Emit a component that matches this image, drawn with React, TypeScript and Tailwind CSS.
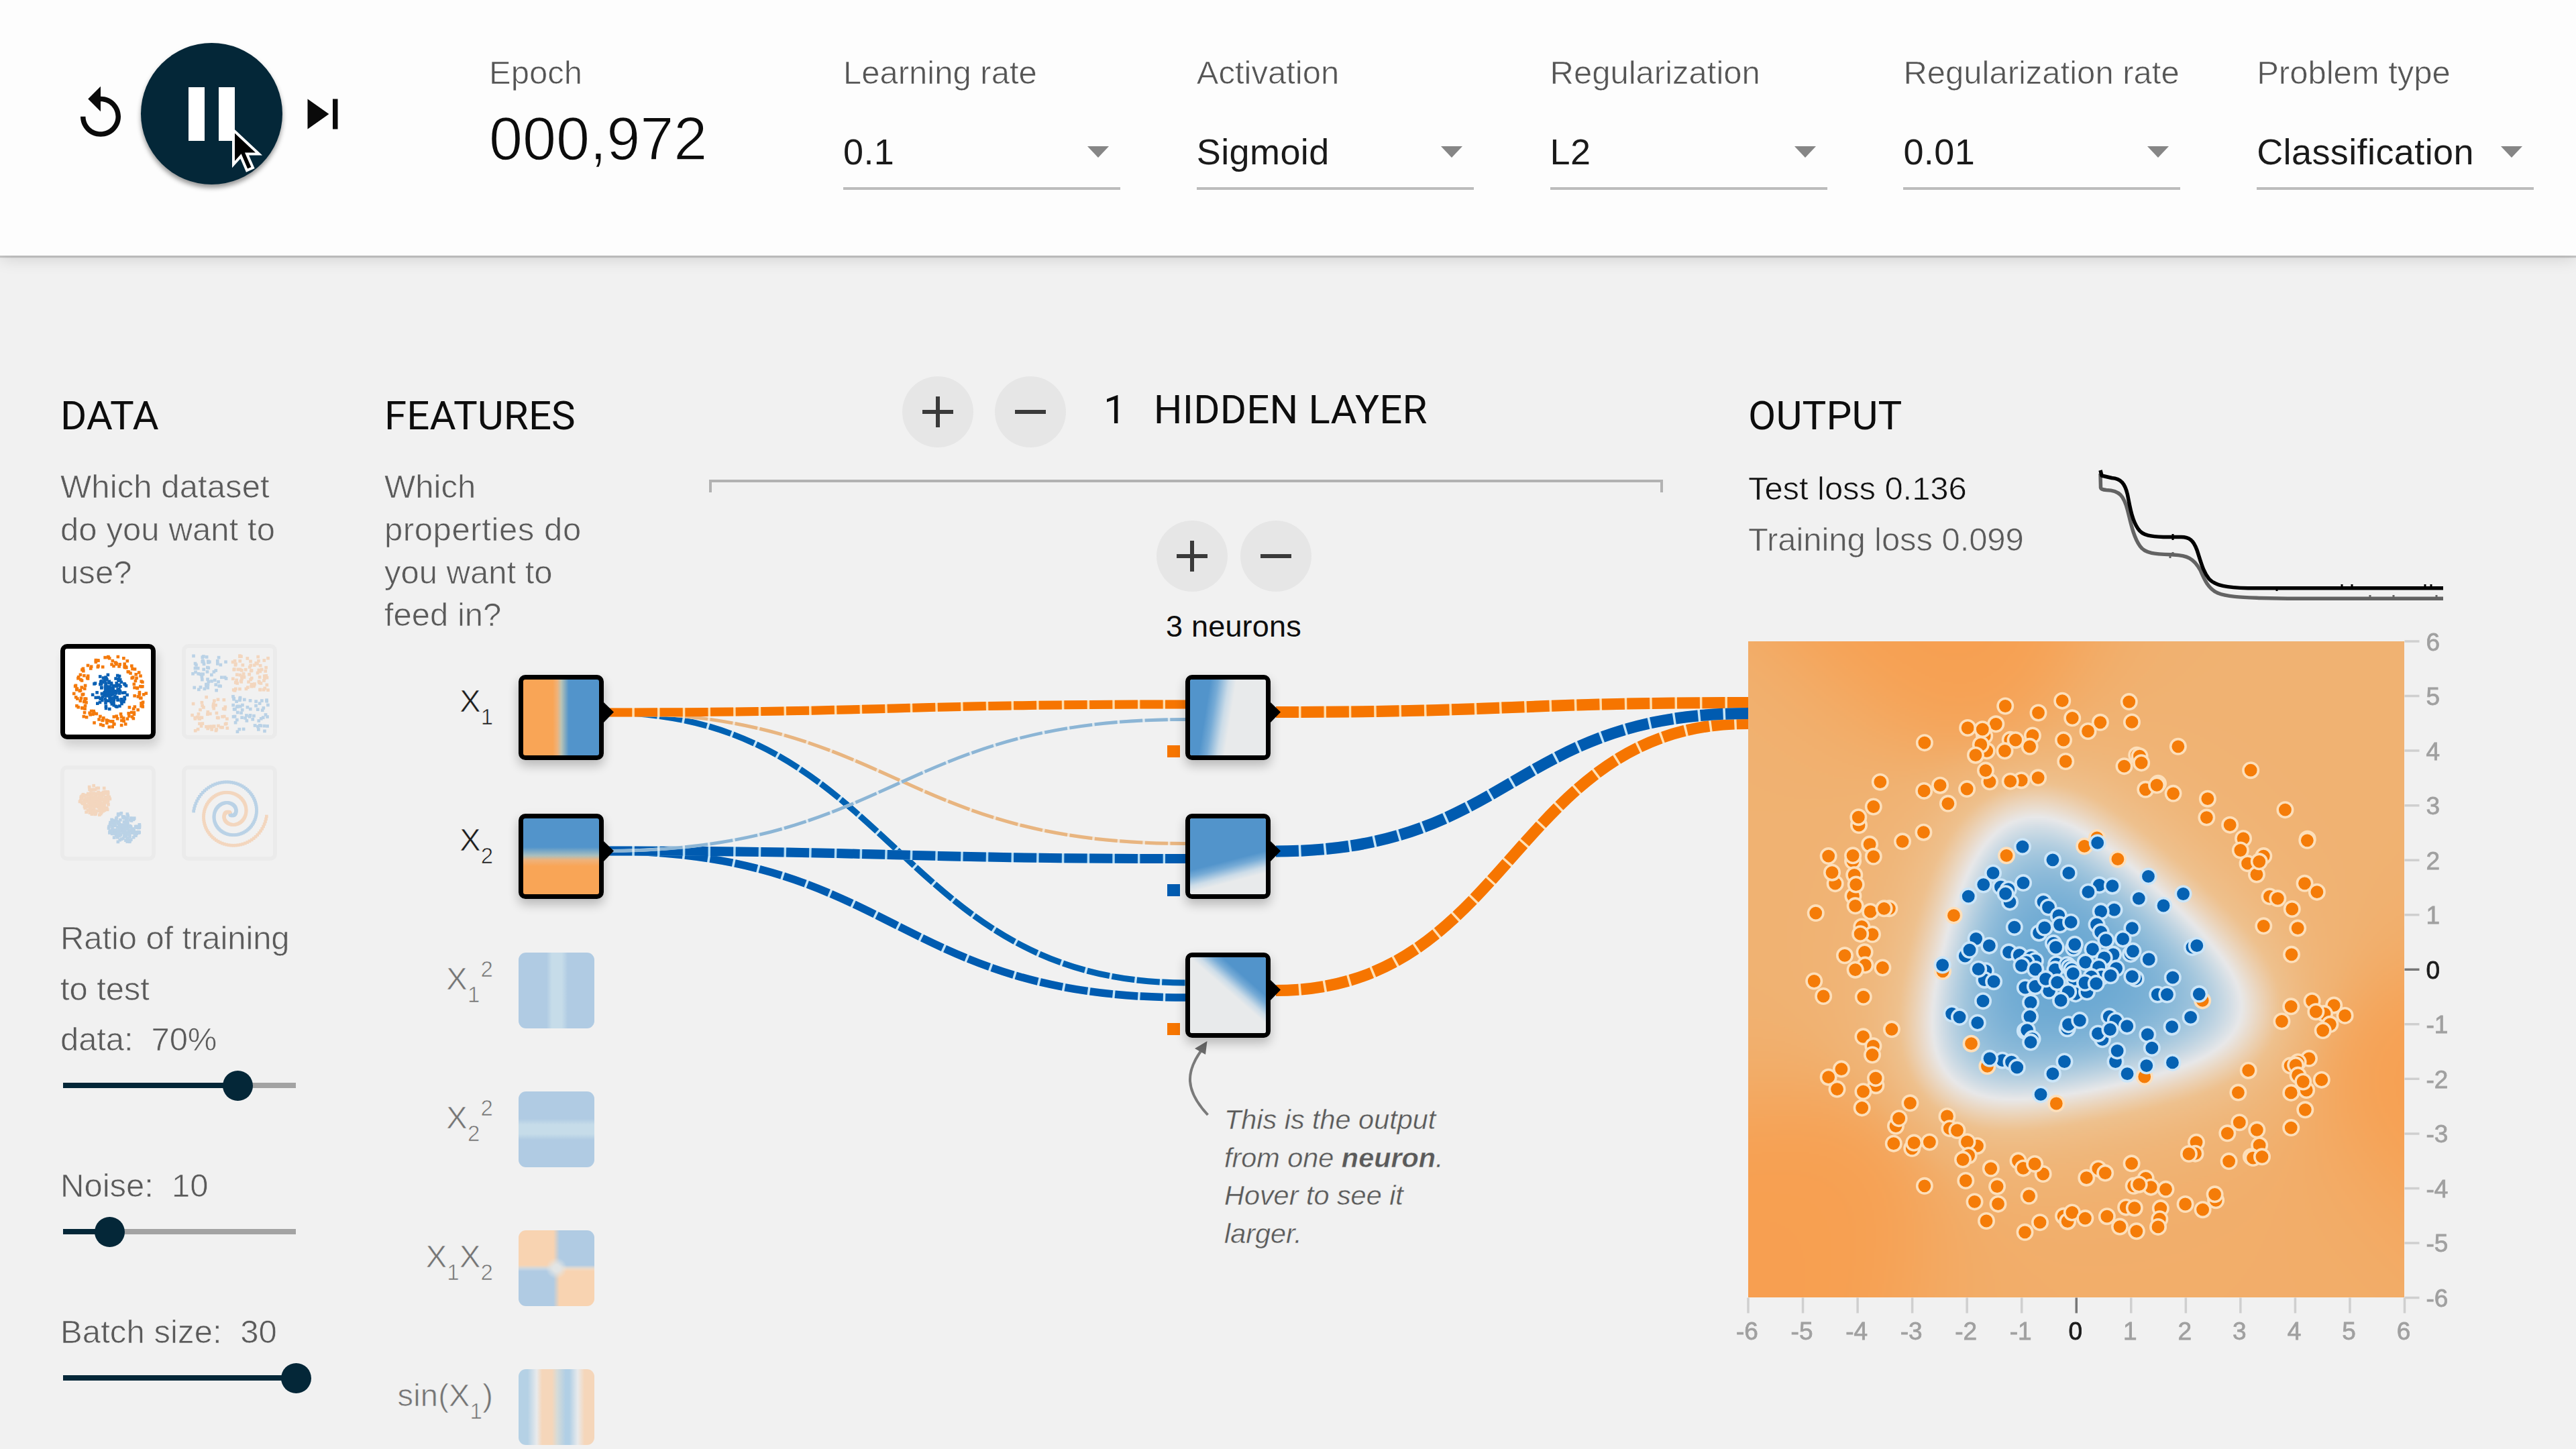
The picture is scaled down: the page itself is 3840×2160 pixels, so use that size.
import React, { useEffect, useRef } from "react";

const ORANGE = "#f67500";
const BLUE = "#005bb0";

type Pt = [number, number];

function seeded(seed: number) {
  let s = seed;
  return () => {
    s = (s * 1664525 + 1013904223) % 4294967296;
    return s / 4294967296;
  };
}

/* ---------- header ---------- */

function Select({ label, value }: { label: string; value: string }) {
  return (
    <div className="w-[413px] shrink-0 pt-[78px]">
      <div className="whitespace-nowrap text-[49px] leading-[60px] text-[#555] [-webkit-text-stroke:0.7px_#fdfdfd]">{label}</div>
      <div className="mt-[58px] flex h-[87px] items-start justify-between border-b-4 border-[#bcbcbc] pr-[17px]">
        <span className="text-[54px] leading-[61px] tracking-[0.400px] text-[#1a1a1a]">{value}</span>
        <svg className="mt-[22px]" width="32" height="17" viewBox="0 0 32 17">
          <path d="M0 0H32L16 17Z" fill="#868686" />
        </svg>
      </div>
    </div>
  );
}

function Header() {
  return (
    <header className="relative z-10 flex h-[381px] bg-[#fdfdfd] shadow-[0_3px_1px_rgba(0,0,0,0.16),0_4px_24px_rgba(0,0,0,0.14)]">
      <div className="ml-[105px] flex h-[339px] shrink-0 items-center">
        <svg width="90" height="90" viewBox="0 0 24 24" fill="#0a0a0a">
          <path d="M12 5V1L7 6l5 5V7c3.31 0 6 2.69 6 6s-2.69 6-6 6-6-2.69-6-6H4c0 4.42 3.58 8 8 8s8-3.58 8-8-3.58-8-8-8z" />
        </svg>
        <div className="relative ml-[15px] flex h-[211px] w-[211px] items-center justify-center gap-[21px] rounded-full bg-[#042738] shadow-[0_5px_7px_rgba(0,0,0,0.4)]">
          <div className="h-[80px] w-[24px] bg-white" />
          <div className="h-[80px] w-[24px] bg-white" />
          <svg className="absolute top-[126px] left-[134px]" width="50" height="72" viewBox="344 190 50 72">
            <path d="M348 194L348 245L359 233L368 254L377 250L368 229.500L386 229.500Z" fill="#000" stroke="#fff" strokeWidth="4" />
          </svg>
        </div>
        <svg className="ml-[15px]" width="90" height="90" viewBox="0 0 24 24" fill="#0a0a0a">
          <path d="M6 18l8.500-6L6 6v12zM16 6v12h2V6h-2z" />
        </svg>
      </div>
      <div className="ml-[203px] w-[528px] shrink-0 pt-[78px]">
        <div className="text-[49px] leading-[60px] text-[#555] [-webkit-text-stroke:0.7px_#fdfdfd]">Epoch</div>
        <div className="mt-[19px] text-[90px] leading-[100px] text-[#0c0c0c] [-webkit-text-stroke:1.400px_#fdfdfd]">000,972</div>
      </div>
      <div className="flex shrink-0 gap-[113.800px]">
        <Select label="Learning rate" value="0.1" />
        <Select label="Activation" value="Sigmoid" />
        <Select label="Regularization" value="L2" />
        <Select label="Regularization rate" value="0.01" />
        <Select label="Problem type" value="Classification" />
      </div>
    </header>
  );
}

/* ---------- data column ---------- */

type Dot = { x: number; y: number; c: "o" | "b" };

function circleDots(): Dot[] {
  const r = seeded(7);
  const out: Dot[] = [];
  for (let i = 0; i < 155; i++) {
    const a = r() * Math.PI * 2;
    const d = 37 + r() * 17;
    out.push({ x: 74 + d * Math.cos(a), y: 71 + d * Math.sin(a), c: "o" });
  }
  for (let i = 0; i < 170; i++) {
    const a = r() * Math.PI * 2;
    const d = r() * 27;
    out.push({ x: 74 + d * Math.cos(a), y: 71 + d * Math.sin(a), c: "b" });
  }
  return out;
}

function xorDots(): Dot[] {
  const r = seeded(31);
  const out: Dot[] = [];
  for (let i = 0; i < 250; i++) {
    const x = (r() * 2 - 1) * 52;
    const y = (r() * 2 - 1) * 52;
    const px = x + (x > 0 ? 4 : -4);
    const py = y + (y > 0 ? 4 : -4);
    out.push({ x: 72 + px, y: 74 + py, c: x * y >= 0 ? "b" : "o" });
  }
  return out;
}

function gaussDots(): Dot[] {
  const r = seeded(5);
  const out: Dot[] = [];
  const add = (cx: number, cy: number, c: "o" | "b") => {
    for (let i = 0; i < 200; i++) {
      const a = r() * Math.PI * 2;
      const d = 23 * Math.pow(r(), 0.8);
      out.push({ x: cx + d * Math.cos(a), y: cy + d * Math.sin(a), c });
    }
  };
  add(52, 52, "o");
  add(95, 93, "b");
  return out;
}

function spiralDots(): Dot[] {
  const out: Dot[] = [];
  for (let i = 0; i < 150; i++) {
    const d = (i / 150) * 54;
    const t = (1.75 * i * 2 * Math.PI) / 150;
    out.push({ x: 72 + d * Math.sin(t), y: 72 + d * Math.cos(t), c: "b" });
    out.push({ x: 72 - d * Math.sin(t), y: 72 - d * Math.cos(t), c: "o" });
  }
  return out;
}

function Thumb({ dots, active }: { dots: Dot[]; active?: boolean }) {
  const col = active ? { o: "#f47a0c", b: "#0a60b4" } : { o: "#f3d6be", b: "#bad2e6" };
  return (
    <div
      className={
        active
          ? "h-[142px] w-[142px] rounded-[10px] border-[7px] border-black bg-white shadow-[4px_10px_14px_rgba(0,0,0,0.14)]"
          : "h-[142px] w-[142px] rounded-[10px] border-[6px] border-[#ebebeb]"
      }
    >
      <svg className="block h-full w-full" viewBox="7 7 128 128">
        {dots.map((d, i) => (
          <rect key={i} x={d.x - 2.3} y={d.y - 2.3} width="4.600" height="4.600" fill={col[d.c]} />
        ))}
      </svg>
    </div>
  );
}

function Slider({ value }: { value: number }) {
  return (
    <div className="relative ml-[4px] flex h-[45px] w-[347px] items-center">
      <div className="h-[8px] w-full bg-[#a3a3a3]">
        <div className="h-full bg-[#042738]" style={{ width: `${value}%` }} />
      </div>
      <div className="absolute top-0 -ml-[22px] h-[45px] w-[45px] rounded-full bg-[#042738]" style={{ left: `${value}%` }} />
    </div>
  );
}

function DataColumn() {
  return (
    <section className="w-[483px] shrink-0 pt-[204px] text-[49px] text-[#5a5a5a] [-webkit-text-stroke:0.7px_#f1f1f1]">
      <h2 className="font-[Roboto] text-[60px] leading-[70px] text-[#0d0d0d] [-webkit-text-stroke:0]">DATA</h2>
      <p className="mt-[39px] leading-[63.800px] tracking-[0.100px]">
        Which dataset
        <br />
        do you want to
        <br />
        use?
      </p>
      <div className="mt-[75px] grid w-[322px] grid-cols-[142px_142px] gap-x-[39px] gap-y-[39px]">
        <Thumb active dots={circleDots()} />
        <Thumb dots={xorDots()} />
        <Thumb dots={gaussDots()} />
        <Thumb dots={spiralDots()} />
      </div>
      <p className="mt-[78px] leading-[75.500px] tracking-[-0.100px]">
        Ratio of training
        <br />
        to test
        <br />
        data: &nbsp;70%
      </p>
      <div className="mt-[8px]">
        <Slider value={75} />
      </div>
      <p className="mt-[89px] leading-[75px]">Noise: &nbsp;10</p>
      <div className="mt-[9px]">
        <Slider value={20} />
      </div>
      <p className="mt-[89px] leading-[75px] tracking-[0.100px]">Batch size: &nbsp;30</p>
      <div className="mt-[9px]">
        <Slider value={100} />
      </div>
    </section>
  );
}

/* ---------- features column ---------- */

function Sub({ children }: { children: React.ReactNode }) {
  return <span className="align-[-19px] text-[33px] leading-[0]">{children}</span>;
}

function Sup({ children }: { children: React.ReactNode }) {
  return <span className="ml-px align-[19px] text-[33px] leading-[0]">{children}</span>;
}

function Nub() {
  return (
    <svg className="absolute top-[31px] left-[119px]" width="16" height="36" viewBox="0 0 16 36">
      <path d="M0 3H1L16 17.500L1 33H0Z" fill="#000" />
    </svg>
  );
}

function Tile({ bg, children }: { bg?: string; children?: React.ReactNode }) {
  return (
    <div
      className="relative h-[127px] w-[127px] rounded-[10px] border-[7px] border-black shadow-[0_8px_16px_rgba(0,0,0,0.24)]"
      style={{ background: bg ?? "#e8eaeb" }}
    >
      {children}
      <Nub />
    </div>
  );
}

function FeatureRow({ label, active, children }: { label: React.ReactNode; active?: boolean; children: React.ReactNode }) {
  return (
    <div className="flex h-[207px] items-start">
      <div
        className={
          active
            ? "mt-[9px] w-[162px] shrink-0 text-right text-[47px] leading-[60px] whitespace-nowrap text-[#1d1d1d]"
            : "mt-[9px] w-[162px] shrink-0 text-right text-[47px] leading-[60px] tracking-[0.200px] whitespace-nowrap text-[#757575]"
        }
      >
        {label}
      </div>
      <div className="ml-[38px]">{children}</div>
    </div>
  );
}

function FeaturesColumn() {
  return (
    <section className="w-[332px] shrink-0 pt-[204px] text-[49px] text-[#5a5a5a] [-webkit-text-stroke:0.7px_#f1f1f1]">
      <h2 className="font-[Roboto] text-[60px] leading-[70px] tracking-[0.100px] text-[#0d0d0d] [-webkit-text-stroke:0]">FEATURES</h2>
      <p className="mt-[39px] leading-[63.800px] whitespace-nowrap">
        Which
        <br />
        <span className="tracking-[0.600px]">properties do</span>
        <br />
        you want to
        <br />
        feed in?
      </p>
      <div className="mt-[57px]">
        <FeatureRow active label={<>X<Sub>1</Sub></>}>
          <Tile bg="linear-gradient(90deg,#f9a556 0 39%,#efb27a 45%,#bcc4b4 50%,#5294cb 60%)" />
        </FeatureRow>
        <FeatureRow active label={<>X<Sub>2</Sub></>}>
          <Tile bg="linear-gradient(180deg,#5294cb 0 38%,#a9bfbf 49%,#efb27a 55%,#f9a556 63%)" />
        </FeatureRow>
        <FeatureRow label={<>X<Sub>1</Sub><Sup>2</Sup></>}>
          <div className="h-[113px] w-[113px] rounded-[11px] bg-[linear-gradient(90deg,#b0cbe3_0_37%,#c6dce9_44%_57%,#b0cbe3_65%)]" />
        </FeatureRow>
        <FeatureRow label={<>X<Sub>2</Sub><Sup>2</Sup></>}>
          <div className="h-[113px] w-[113px] rounded-[11px] bg-[linear-gradient(180deg,#b0cbe3_0_36%,#c6dce9_44%_56%,#b0cbe3_64%)]" />
        </FeatureRow>
        <FeatureRow label={<>X<Sub>1</Sub>X<Sub>2</Sub></>}>
          <div className="grid h-[113px] w-[113px] overflow-hidden rounded-[11px]">
            <div className="col-start-1 row-start-1 bg-[linear-gradient(90deg,#f8d3b1_0_46%,#b0cbe3_54%)] [mask-image:linear-gradient(180deg,#000_46%,transparent_54%)]" />
            <div className="col-start-1 row-start-1 bg-[linear-gradient(90deg,#b0cbe3_0_46%,#f8d3b1_54%)] [mask-image:linear-gradient(180deg,transparent_46%,#000_54%)]" />
            <div className="isolate col-start-1 row-start-1 bg-[radial-gradient(circle,#e2e5e5_6%,rgba(226,229,229,0)_20%)]" />
          </div>
        </FeatureRow>
        <FeatureRow label={<>sin(X<Sub>1</Sub>)</>}>
          <div className="h-[113px] w-[113px] rounded-[11px] bg-[linear-gradient(90deg,#b5d1e5_0_12%,#e8eaec_24%,#f5d6ba_31%_44%,#d6dbd8_51%,#b1cfe5_62%_67%,#e8eaec_78%,#f5d6ba_87%)]" />
        </FeatureRow>
      </div>
    </section>
  );
}

/* ---------- network ---------- */

function RoundButton({ kind }: { kind: "plus" | "minus" }) {
  return (
    <div className="flex h-[106px] w-[106px] shrink-0 items-center justify-center rounded-full bg-[#e6e6e6]">
      <svg width="46" height="46" viewBox="0 0 46 46" stroke="#3a3a3a" strokeWidth="6">
        <path d={kind === "plus" ? "M0 23H46M23 0V46" : "M0 23H46"} />
      </svg>
    </div>
  );
}

function NetworkHeader() {
  return (
    <section className="w-[1701px] shrink-0 pt-[180px]">
      <div className="flex h-[106px] items-center pl-[440px]">
        <RoundButton kind="plus" />
        <div className="w-[32px]" />
        <RoundButton kind="minus" />
        <span className="-mt-[6px] ml-[56px] font-[Roboto] text-[60px] leading-[70px] text-[#0d0d0d]">1</span>
        <span className="-mt-[6px] ml-[41px] font-[Roboto] text-[60px] leading-[70px] tracking-[0.150px] whitespace-nowrap text-[#0d0d0d]">HIDDEN LAYER</span>
      </div>
      <div className="mt-[48px] ml-[152px] h-[19px] w-[1422px] border-x-[4px] border-t-[4px] border-[#b2b2b2]" />
      <div className="mt-[42px] flex gap-[19px] pl-[819px]">
        <RoundButton kind="plus" />
        <RoundButton kind="minus" />
      </div>
      <div className="mt-[25px] pl-[833px] text-[45px] leading-[54px] tracking-[0.200px] text-[#0d0d0d]">3 neurons</div>
    </section>
  );
}

type Link = {
  x0: number;
  y0: number;
  x1: number;
  y1: number;
  w: number;
  color: string;
  gap: string;
  dash: string;
  shift: number;
};

const IN = { x0: 900, x1: 1767, dash: "34.2 3.5", shift: 29.7 };
const OUT = { x0: 1902, x1: 2606, dash: "33.9 3.5", shift: 0 };

const LINKS: Link[] = [
  { ...IN, y0: 1062, y1: 1465, w: 9, color: "#0061b2", gap: "#c3e4f7" },
  { ...IN, y0: 1062, y1: 1257.5, w: 5, color: "#e8b580", gap: "#f3e3d0" },
  { ...IN, y0: 1062, y1: 1050, w: 13, color: ORANGE, gap: "#ffdcaa" },
  { ...IN, y0: 1268.5, y1: 1487, w: 11.5, color: BLUE, gap: "#c3e4f7" },
  { ...IN, y0: 1268.5, y1: 1280, w: 14, color: BLUE, gap: "#aedaf5" },
  { ...IN, y0: 1268.5, y1: 1072.5, w: 4.8, color: "#8cb5d5", gap: "#dbe8f0" },
  { ...OUT, y0: 1476.5, y1: 1078.5, w: 17, color: ORANGE, gap: "#ffe0b4" },
  { ...OUT, y0: 1061.5, y1: 1047.5, w: 17, color: ORANGE, gap: "#ffdcaa" },
  { ...OUT, y0: 1269, y1: 1063.5, w: 17, color: BLUE, gap: "#c3e4f7" },
];

function curve(l: Link) {
  const m = (l.x0 + l.x1) / 2;
  return `M${l.x0} ${l.y0}C${m} ${l.y0} ${m} ${l.y1} ${l.x1} ${l.y1}`;
}

function Links() {
  return (
    <svg className="absolute top-0 left-0" width="3840" height="1779" viewBox="0 381 3840 1779" fill="none">
      {LINKS.map((l, i) => (
        <g key={i} strokeWidth={l.w}>
          <path d={curve(l)} stroke={l.gap} />
          <path d={curve(l)} stroke={l.color} strokeDasharray={l.dash} strokeDashoffset={l.shift} />
        </g>
      ))}
      <rect x="1740" y="1111" width="19" height="18" fill={ORANGE} />
      <rect x="1740" y="1318" width="19" height="18" fill={BLUE} />
      <rect x="1740" y="1525" width="19" height="18" fill={ORANGE} />
      <path d="M1800.500 1662C1767 1626 1766 1598 1793 1563" stroke="#7a7a7a" strokeWidth="4" />
      <path d="M1799.500 1552L1781 1563L1797 1572Z" fill="#6a6a6a" />
    </svg>
  );
}

function NeuronMap({ id, a, b }: { id: string; a: Pt; b: Pt }) {
  return (
    <svg className="block h-full w-full rounded-[3px]" viewBox="0 0 113 113">
      <defs>
        <linearGradient id={id} gradientUnits="userSpaceOnUse" x1={a[0]} y1={a[1]} x2={b[0]} y2={b[1]}>
          <stop offset="0" stopColor="#5294cb" />
          <stop offset="0.3" stopColor="#76abd6" />
          <stop offset="0.72" stopColor="#ccdce8" />
          <stop offset="1" stopColor="#e8eaeb" />
        </linearGradient>
      </defs>
      <rect width="113" height="113" fill={`url(#${id})`} />
    </svg>
  );
}

function Neurons() {
  return (
    <div className="absolute top-[625px] left-[1767px] flex flex-col gap-[80px]">
      <Tile>
        <NeuronMap id="n1" a={[22, 53]} b={[60, 59]} />
      </Tile>
      <Tile>
        <NeuronMap id="n2" a={[52, 64]} b={[60, 95]} />
      </Tile>
      <Tile>
        <NeuronMap id="n3" a={[80, 28]} b={[59, 52]} />
      </Tile>
    </div>
  );
}

function Callout() {
  return (
    <div className="absolute top-[1260px] left-[1825px] text-[41.400px] leading-[56.700px] whitespace-nowrap text-[#5a5a5a] italic [-webkit-text-stroke:0.4px_#f1f1f1]">
      <div>This is the output</div>
      <div>
        from one <b>neuron</b>.
      </div>
      <div>Hover to see it</div>
      <div>larger.</div>
    </div>
  );
}

/* ---------- output ---------- */

// Samples grouped by plot quadrant; each quadrant has its own origin and scale.
type Quad = { ox: number; oy: number; sx: number; o: number[]; b: number[] };

const QUADS: Quad[] = [
  {
    ox: -15.7, oy: -16, sx: 2.8,
    o: [1117,315,1355,293,1255,343,1397,365,960,406,1078,390,1030,440,1022,412,1040,502,1015,476,993,520,1138,456,1160,457,1231,438,1115,502,1219,484,1360,457,1369,546,780,468,595,632,1052,631,1035,584,1184,625,1138,629,1254,614,778,669,845,646,957,661,878,722,567,735,506,812,504,779,776,842,688,880,551,892,567,943,379,941,481,962,481,939,407,1056,394,1010,487,1020,482,1108,494,1060,491,1149,326,1179,633,1160,554,1173,611,1160,518,1236,562,1268,512,1266,530,1342,447,1356,532,1396,491,1416,605,1407,319,1463,902,1189,1122,939,856,1422],
    b: [1189,902,1315,957,1382,1012,1066,1012,1026,1060,963,1109,1098,1070,1130,1080,1136,1133,1118,1098,1192,1053,1276,1132,1297,1155,1155,1238,1340,1190,1345,1228,1391,1217,1258,1262,1281,1240,995,1286,949,1358,968,1333,1050,1315,1318,1305,1328,1322,1402,1325,1407,1310,1132,1342,1176,1354,1225,1365,1242,1378,1205,1385,1185,1398,1243,1414,855,1396,1035,1420,1030,1458,1005,1413,1069,1465,1330,1392,1325,1415,1375,1395,1385,1405,1395,1415,1405,1455,1400,1432,1200,1490,1300,1503,1242,1485,1286,1454,1334,1468,1410,1516,1380,1508],
  },
  {
    ox: 494.3, oy: -16, sx: 2.6133,
    o: [192,297,80,383,32,420,203,382,383,484,222,520,233,524,240,552,173,566,666,583,256,663,305,638,300,645,364,680,498,702,494,780,585,811,800,748,637,868,887,870,886,876,626,917,716,941,654,972,689,1018,699,964,876,1055,924,1091,740,1110,771,1118,827,1162,716,1233,849,1242,825,1352,18,900,67,865,148,954],
    b: [69,886,267,1026,403,1099,76,1062,127,1066,33,1091,230,1118,326,1148,134,1165,82,1172,66,1227,82,1258,204,1242,102,1292,168,1287,50,1330,438,1322,456,1315,198,1350,207,1338,130,1352,95,1366,269,1372,22,1384,142,1410,74,1404,85,1445,120,1440,45,1445,218,1453,204,1444,362,1448,28,1508,20,1470,64,1473],
  },
  {
    ox: -15.7, oy: 504, sx: 2.8,
    o: [358,70,525,73,643,208,524,239,566,278,562,315,433,374,379,408,415,458,577,443,576,412,524,468,519,536,720,516,660,612,673,580,651,685,728,705,736,682,801,679,874,571,885,622,916,630,1000,695,958,678,964,735,940,752,1057,789,952,840,780,862,1083,864,989,928,1087,937,1038,1008,1171,757,1192,788,1275,812,1240,770,1216,904,1262,1014,1199,1055,1360,988,1377,1010,1396,973,975,268,1042,362,1330,518],
    b: [1024,90,1223,96,1349,88,894,143,926,157,1001,181,1220,155,1200,215,1208,212,1230,248,1223,262,1376,205,1381,188,1105,338,1052,330,1143,345,1166,367,1364,343,1315,394,1265,480],
  },
  {
    ox: 494.3, oy: 504, sx: 2.6133,
    o: [478,88,823,113,905,90,990,108,953,143,920,135,1033,151,787,175,975,187,947,213,893,330,820,360,850,345,841,358,850,400,657,380,617,472,942,419,883,462,870,427,823,473,878,544,622,597,690,628,575,642,823,619,454,680,700,692,450,727,425,728,668,740,675,745,710,740,581,759,202,768,72,790,99,808,26,828,257,830,210,862,277,867,231,856,335,876,530,922,526,897,411,938,479,961,180,951,213,954,315,955,21,997,106,989,311,1000,305,1033,156,1032,221,1051,252,406],
    b: [0,171,303,63,340,63,465,61,432,158,115,155,140,172,184,195,359,198,88,250,71,226,118,209,264,230,281,286,139,343,146,298,361,347,260,360,185,394],
  },
];

function samples(kind: "o" | "b"): Pt[] {
  return QUADS.flatMap((q) => {
    const out: Pt[] = [];
    const src = q[kind];
    for (let i = 0; i < src.length; i += 2) out.push([src[i] / q.sx + q.ox, src[i + 1] / 2.8 + q.oy]);
    return out;
  });
}

const STOPS: [number, number, number, number][] = [
  [-1, 247, 159, 80],
  [-0.76, 240, 178, 114],
  [-0.42, 238, 193, 142],
  [0, 232, 232, 233],
  [0.4, 160, 197, 221],
  [0.7, 110, 170, 211],
  [1, 82, 148, 203],
];

function shade(v: number) {
  for (let i = 1; i < STOPS.length; i++) {
    if (v <= STOPS[i][0]) {
      const a = STOPS[i - 1];
      const b = STOPS[i];
      const t = (v - a[0]) / (b[0] - a[0]);
      return [1, 2, 3].map((k) => a[k] + (b[k] - a[k]) * t);
    }
  }
  return STOPS[STOPS.length - 1].slice(1);
}

const sigmoid = (v: number) => 1 / (1 + Math.exp(-v));

// Three sigmoid neurons combined into one tanh output.
function predict(x: number, y: number) {
  const k = 1.45;
  const h1 = sigmoid(k * (-2.46 + 0.26 * y - x));
  const h2 = sigmoid(k * 0.98 * (y + 2.46 - 0.2 * (x + 0.94)));
  const h3 = sigmoid(k * 0.743 * (y - 1.82 + 0.9 * (x - 0.95)));
  return Math.tanh(-2.2 * h1 + 2.35 * h2 - 2.2 * h3 - 1.15);
}

function Heatmap() {
  const ref = useRef<HTMLCanvasElement>(null);
  useEffect(() => {
    const ctx = ref.current?.getContext("2d");
    if (!ctx) return;
    const n = 326;
    const img = ctx.createImageData(n, n);
    for (let j = 0; j < n; j++) {
      for (let i = 0; i < n; i++) {
        const c = shade(predict(((i + 0.5) / n) * 12 - 6, 6 - ((j + 0.5) / n) * 12));
        const k = (j * n + i) * 4;
        img.data[k] = c[0];
        img.data[k + 1] = c[1];
        img.data[k + 2] = c[2];
        img.data[k + 3] = 255;
      }
    }
    ctx.putImageData(img, 0, 0);
  }, []);
  return <canvas ref={ref} width={326} height={326} className="col-start-1 row-start-1 h-[978px] w-[978px]" />;
}

function Plot() {
  const ticks = [-6, -5, -4, -3, -2, -1, 0, 1, 2, 3, 4, 5, 6];
  const S = 978.5;
  return (
    <div className="mt-[55px] grid h-[978px] w-[978px]">
      <Heatmap />
      <svg className="col-start-1 row-start-1 overflow-visible" width="978" height="978" viewBox="0 0 978 978">
        {samples("o").map(([x, y], i) => (
          <circle key={i} cx={x} cy={y} r="11.200" fill="#f57c08" stroke="#fddfba" strokeWidth="3.600" />
        ))}
        {samples("b").map(([x, y], i) => (
          <circle key={i} cx={x} cy={y} r="11.200" fill="#0662b3" stroke="#cbe5f8" strokeWidth="3.600" />
        ))}
        {ticks.map((t) => {
          const p = ((t + 6) / 12) * S;
          const line = t === 0 ? "#777" : "#cfcfcf";
          const text = t === 0 ? "#1c1c1c" : "#a0a0a0";
          return (
            <g key={t} fontSize="37" fill={text}>
              <path d={`M${p} ${S}V${S + 23}M${S} ${S - p}H${S + 22}`} stroke={line} strokeWidth="3.500" />
              <text x={p - 1.5} y={1041} textAnchor="middle" stroke={text} strokeWidth="0.800">{t}</text>
              <text x={S + 32} y={S - p + 13.5} stroke={text} strokeWidth="0.800">{t}</text>
            </g>
          );
        })}
      </svg>
    </div>
  );
}

function LossChart() {
  return (
    <svg width="520" height="210" viewBox="3125 691 520 210" fill="none" strokeWidth="5.500" strokeLinejoin="round">
      <path
        stroke="#636363"
        d="M3131 706L3131.500 727Q3132 730 3140 730.500C3160 731 3166 740 3171.400 760C3176 778 3180 800 3190 814C3198 826 3215 826 3240 827C3260 828 3270 832 3280 850C3286 864 3292 878 3306 884C3320 890 3345 890.500 3370 891.500L3410 892.300H3642"
      />
      <path
        stroke="#000"
        d="M3131 701L3133 709L3148 712.500C3162 713 3168 722 3171.400 737C3175 755 3178 775 3187 788C3194 799 3208 800 3225 800.500H3250C3264 800 3270 806 3275 820C3281 838 3284 852 3293 863C3302 873 3320 876 3351 876.800H3642"
      />
      <path stroke="#000" strokeWidth="3" d="M3239 796V805M3491 871V877M3506 871V877M3615 871V877M3624 871V877M3394 877V881" />
      <path stroke="#636363" strokeWidth="3" d="M3239 823V828M3235 828V832M3533 887V892M3568 887V892M3632 887V892" />
    </svg>
  );
}

function OutputColumn() {
  return (
    <section className="w-[1100px] shrink-0 pt-[204px]">
      <h2 className="font-[Roboto] text-[60px] leading-[70px] tracking-[0.150px] text-[#0d0d0d]">OUTPUT</h2>
      <div className="mt-[36px] flex items-start">
        <div className="w-[519px] text-[49px] leading-[75.500px] tracking-[-0.080px] whitespace-nowrap [-webkit-text-stroke:0.7px_#f1f1f1]">
          <div className="text-[#111]">Test loss 0.136</div>
          <div className="text-[#5a5a5a]">Training loss 0.099</div>
        </div>
        <LossChart />
      </div>
      <Plot />
    </section>
  );
}

export default function App() {
  return (
    <div className="h-[2160px] w-[3840px] overflow-hidden bg-[#f1f1f1] font-['Liberation_Sans',Arial,sans-serif]">
      <Header />
      <main className="relative flex h-[1779px] pl-[90px]">
        <Links />
        <div className="relative flex">
          <DataColumn />
          <FeaturesColumn />
          <NetworkHeader />
          <OutputColumn />
        </div>
        <Neurons />
        <Callout />
      </main>
    </div>
  );
}
